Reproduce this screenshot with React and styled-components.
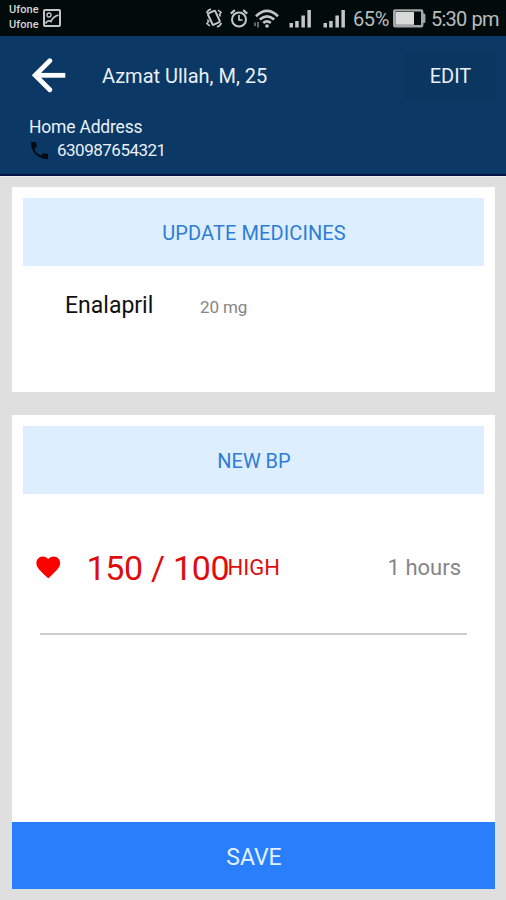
import styled, {createGlobalStyle} from 'styled-components';
import {MdFavorite, MdPhone} from 'react-icons/md';

export default function App() {
  return (
    <>
      <GlobalStyle />
      <StyledScreen>
        <StatusBar />
        <PatientHeader name="Azmat Ullah, M, 25" address="Home Address" phone="630987654321" />
        <StyledContent>
          <StyledCard $height={205}>
            <StyledCardButton $spacing={0.1}>UPDATE MEDICINES</StyledCardButton>
            <StyledMedicine>
              <StyledMedicineName>Enalapril</StyledMedicineName>
              <StyledDose>20 mg</StyledDose>
            </StyledMedicine>
          </StyledCard>
          <StyledCard $height={407}>
            <StyledCardButton $spacing={0}>NEW BP</StyledCardButton>
            <StyledMeasurement>
              <MdFavorite size={28.5} color="#fc0000" />
              <StyledPressure>150 / 100</StyledPressure>
              <StyledLevel>HIGH</StyledLevel>
              <StyledTime>1 hours</StyledTime>
            </StyledMeasurement>
          </StyledCard>
          <StyledSaveButton>SAVE</StyledSaveButton>
        </StyledContent>
      </StyledScreen>
    </>
  );
}

function StatusBar() {
  return (
    <StyledStatusBar>
      <StyledCarriers>
        <span>Ufone</span>
        <span>Ufone</span>
      </StyledCarriers>
      <ImageIcon />
      <StyledStatusIcons>
        <VibrateIcon />
        <AlarmIcon />
        <WifiIcon />
        <SignalIcon />
        <SignalIcon />
      </StyledStatusIcons>
      <StyledBatteryLevel>65%</StyledBatteryLevel>
      <BatteryIcon />
      <StyledClock>5:30 pm</StyledClock>
    </StyledStatusBar>
  );
}

function PatientHeader({name, address, phone}) {
  return (
    <StyledHeader>
      <StyledToolbar>
        <StyledBackButton type="button" aria-label="Back">
          <svg width="36" height="36" viewBox="0 0 36 36" fill="none" stroke="#fff" strokeWidth="4.8">
            <path d="M4 17.3H35.3" />
            <path d="M19.8 2.8L5.2 17.3L19.8 31.8" strokeLinecap="round" />
          </svg>
        </StyledBackButton>
        <StyledName>{name}</StyledName>
        <StyledEditButton type="button">EDIT</StyledEditButton>
      </StyledToolbar>
      <StyledAddress>{address}</StyledAddress>
      <StyledPhone>
        <MdPhone size={23} color="#020a12" />
        <span>{phone}</span>
      </StyledPhone>
    </StyledHeader>
  );
}

function ImageIcon() {
  return (
    <svg width="18" height="18" viewBox="0 0 18 18" fill="none" stroke="#c4c6c6" strokeWidth="2">
      <rect x="1" y="1" width="16" height="16" rx="1" />
      <circle cx="6" cy="6" r="2" strokeWidth="1.4" />
      <path d="M2.5 14.5Q5 10.5 8 12.5Q10 7.5 15.5 6" strokeWidth="1.8" />
    </svg>
  );
}

function VibrateIcon() {
  return (
    <svg width="18" height="20" viewBox="0 0 18 20" fill="none" stroke="#c4c6c6" strokeWidth="2">
      <rect x="5" y="3.5" width="8" height="12.5" rx="1" transform="rotate(-25 9 10)" />
      <path d="M3.5 2.2L1.5 5M6 1.2L3 2.5M14.5 17.8L16.5 15M12 18.8L15 17.5" strokeWidth="1.8" />
      <path d="M2.5 11.5L3.5 13.5L2 15.5L5 18M15.5 8.5L14.5 6.5L16 4.5L13 2" strokeWidth="1.6" />
    </svg>
  );
}

function AlarmIcon() {
  return (
    <svg width="18" height="19" viewBox="0 0 18 19" fill="none" stroke="#c4c6c6" strokeWidth="2">
      <circle cx="9" cy="10.5" r="7" />
      <path d="M9 6V11H12.5" strokeWidth="1.7" />
      <path d="M0.8 4.6L4.8 1.2M17.2 4.6L13.2 1.2" strokeWidth="2.2" />
    </svg>
  );
}

function WifiIcon() {
  return (
    <svg width="26" height="19" viewBox="0 0 26 19" fill="none" stroke="#c4c6c6" strokeWidth="2.7">
      <path d="M2 7.2Q13 -3.4 24 7.2" />
      <path d="M5.8 10.6Q13 4 20.2 10.6" />
      <path d="M9.2 14Q13 10.8 16.8 14" />
      <circle cx="13" cy="17" r="1.8" fill="#c4c6c6" stroke="none" />
      <path d="M1 13.5V17M4 13V18.5" strokeWidth="1.6" stroke="#7b8081" />
    </svg>
  );
}

function SignalIcon() {
  return (
    <svg width="23" height="19" viewBox="0 0 23 19" fill="#c4c6c6">
      <rect x="0.5" y="14" width="3.5" height="4.5" />
      <rect x="6.2" y="12" width="3.5" height="6.5" />
      <rect x="12.4" y="6.5" width="3.5" height="12" />
      <rect x="18.4" y="1" width="3.5" height="17.5" />
    </svg>
  );
}

function BatteryIcon() {
  return (
    <svg width="33" height="19" viewBox="0 0 33 19">
      <rect x="1.2" y="1.4" width="28" height="15.8" rx="1" fill="none" stroke="#a4a7a7" strokeWidth="2.4" />
      <rect x="2.4" y="3" width="18.6" height="12.8" fill="#d8dada" />
      <path d="M30 4.5H31.2Q32.4 4.5 32.4 6V12.5Q32.4 14 31.2 14H30Z" fill="#a4a7a7" />
    </svg>
  );
}

const GlobalStyle = createGlobalStyle`
  * {
    box-sizing: border-box;
  }

  body {
    margin: 0;
    font-family: Roboto, 'Liberation Sans', sans-serif;
    background: #dfdfdf;
  }

  button {
    border: 0;
    padding: 0;
    font-family: inherit;
  }

  svg {
    display: block;
    flex-shrink: 0;
  }
`;

const StyledScreen = styled.div`
  width: 506px;
  height: 900px;
  overflow: hidden;
  line-height: 1;
  white-space: nowrap;
  background: #dfdfdf;
`;

const StyledStatusBar = styled.div`
  display: flex;
  align-items: center;
  height: 36px;
  padding-left: 9px;
  color: #b9bcbc;
  background: #020b0b;
`;

const StyledCarriers = styled.div`
  display: flex;
  flex-direction: column;
  width: 34px;
  padding-bottom: 2px;
  font-size: 11px;
  font-weight: 500;
  line-height: 15px;
  letter-spacing: 0.1px;
  color: #d5d7d7;
`;

const StyledStatusIcons = styled.div`
  display: flex;
  align-items: center;
  width: 148px;
  margin-left: 144px;

  svg:nth-child(2) {
    margin-left: 7px;
  }
  svg:nth-child(3) {
    margin-left: 6px;
  }
  svg:nth-child(4) {
    margin-left: 9px;
  }
  svg:nth-child(5) {
    margin-left: 11px;
  }
`;

const StyledBatteryLevel = styled.span`
  width: 40px;
  padding-top: 2px;
  font-size: 20px;
  letter-spacing: -0.4px;
`;

const StyledClock = styled.span`
  margin-left: 5px;
  padding-top: 2px;
  font-size: 20px;
  letter-spacing: -0.8px;
  word-spacing: 1px;
`;

const StyledHeader = styled.header`
  height: 140px;
  color: #e9f0f8;
  background: #0b3865;
  border-bottom: 2px solid #021344;
`;

const StyledToolbar = styled.div`
  display: flex;
  align-items: center;
  height: 80px;
  padding: 0 10px 0 30px;
`;

const StyledBackButton = styled.button`
  width: 72px;
  background: transparent;
`;

const StyledName = styled.h1`
  margin: 0;
  flex: 1;
  font-size: 20px;
  font-weight: 400;
`;

const StyledEditButton = styled.button`
  width: 91px;
  height: 50px;
  font-size: 20px;
  color: #e9f0f8;
  background: #0a3660;
`;

const StyledAddress = styled.div`
  padding: 3px 0 0 29px;
  font-size: 17.5px;
  letter-spacing: -0.2px;
`;

const StyledPhone = styled.div`
  display: flex;
  align-items: center;
  gap: 6px;
  height: 22px;
  margin-top: 3px;
  padding-left: 28px;
  font-size: 17px;
  letter-spacing: -0.5px;
`;

const StyledContent = styled.main`
  display: flex;
  flex-direction: column;
  padding: 10px 11px 0 12px;
  border-top: 1px solid #eef0f3;
`;

const StyledCard = styled.section`
  height: ${({$height}) => $height}px;
  padding: 11px 11px 0;
  background: #fff;

  & + & {
    margin-top: 23px;
  }
`;

const StyledCardButton = styled.button`
  width: 100%;
  height: 68px;
  padding: 2px 0 0 1px;
  font-size: 20px;
  letter-spacing: ${({$spacing}) => $spacing}px;
  color: #2f7dd3;
  background: #dceeff;
`;

const StyledMedicine = styled.div`
  display: flex;
  align-items: baseline;
  padding: 28px 0 0 42px;
`;

const StyledMedicineName = styled.span`
  width: 135px;
  font-size: 23px;
  color: #111;
`;

const StyledDose = styled.span`
  font-size: 17px;
  letter-spacing: -0.1px;
  color: #858585;
`;

const StyledMeasurement = styled.div`
  display: flex;
  align-items: center;
  height: 141px;
  margin: 0 17px;
  padding-top: 8px;
  border-bottom: 2px solid #cecece;

  svg {
    margin: -1px 0 0 -6px;
  }
`;

const StyledPressure = styled.span`
  width: 141px;
  margin-left: 24px;
  font-size: 34px;
  letter-spacing: -0.3px;
  color: #df0d0d;
`;

const StyledLevel = styled.span`
  font-size: 22px;
  color: #df0d0d;
`;

const StyledTime = styled.span`
  margin-left: auto;
  padding-right: 6px;
  font-size: 22px;
  color: #858585;
`;

const StyledSaveButton = styled.button`
  height: 67px;
  padding: 3px 0 0 1px;
  font-size: 23px;
  color: #e3f1ff;
  background: #297efc;
`;
